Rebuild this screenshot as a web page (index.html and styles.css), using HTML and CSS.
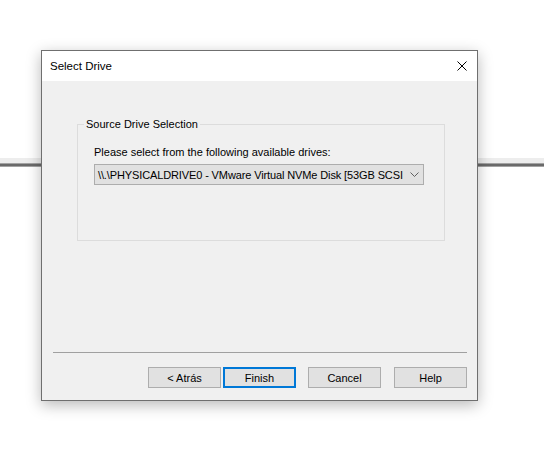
FILE: index.html
```html
<!DOCTYPE html>
<html>
<head>
<meta charset="utf-8">
<link rel="stylesheet" href="styles.css">
</head>
<body>
<div class="backdrop">
  <div class="band"></div>
  <div class="rule"></div>
</div>
<div class="dialog">
  <div class="titlebar">
    <span class="title">Select Drive</span>
    <svg class="close" width="10" height="10" viewBox="0 0 10 10"><path d="M0.5 0.5L9.5 9.5M9.5 0.5L0.5 9.5" stroke="#000" stroke-width="1" fill="none"/></svg>
  </div>
  <div class="body">
    <fieldset class="group">
      <legend>Source Drive Selection</legend>
      <div class="group-content">
        <div class="label">Please select from the following available drives:</div>
        <div class="combo">
          <span class="combo-text">\\.\PHYSICALDRIVE0 - VMware Virtual NVMe Disk [53GB SCSI</span>
          <svg class="chev" width="9" height="5" viewBox="0 0 9 5"><path d="M0.5 0.5L4.5 4.5L8.5 0.5" stroke="#606060" stroke-width="1" fill="none"/></svg>
        </div>
      </div>
    </fieldset>
    <div class="spacer"></div>
    <div class="separator"></div>
    <div class="buttons">
      <div class="btn">&lt; Atrás</div>
      <div class="btn btn-default">Finish</div>
      <div class="btn btn-cancel">Cancel</div>
      <div class="btn btn-help">Help</div>
    </div>
  </div>
</div>
</body>
</html>
```

FILE: styles.css
```css
html, body {
  margin: 0;
  padding: 0;
  background: #ffffff;
  width: 544px;
  height: 473px;
  overflow: hidden;
  font-family: "Liberation Sans", Arial, sans-serif;
  font-size: 11px;
  color: #000;
}

.backdrop {
  padding-top: 158px;
}
.band {
  height: 5px;
  background: #ededed;
}
.rule {
  border-top: 1px solid #a3a3a3;
  border-bottom: 1px solid #a3a3a3;
  height: 2px;
  background: #6a6a6a;
}

.dialog {
  position: absolute;
  left: 41px;
  top: 50px;
  width: 435px;
  height: 349px;
  border: 1px solid #6f6f6f;
  background: #f0f0f0;
  display: flex;
  flex-direction: column;
  box-shadow: 0 4px 14px rgba(0, 0, 0, 0.28);
}

.titlebar {
  height: 30px;
  background: #ffffff;
  display: flex;
  align-items: center;
  justify-content: space-between;
  padding: 0 10px 0 8px;
}
.title {
  font-size: 11.5px;
  margin-top: -1px;
}
.close {
  display: block;
}

.body {
  flex: 1;
  display: flex;
  flex-direction: column;
  padding: 0 10px 12px 0;
}

.group {
  margin: 37px 22px 0 35px;
  padding: 0;
  border: 1px solid #dcdcdc;
  min-width: 0;
}
.group legend {
  margin-left: 6px;
  padding: 0 2px;
  line-height: 13px;
}
.group-content {
  padding: 0 0 55px 16px;
}
.label {
  margin-top: 15px;
  line-height: 13px;
}
.combo {
  margin-top: 5px;
  width: 328px;
  height: 19px;
  border: 1px solid #adadad;
  background: #e1e1e1;
  display: flex;
  align-items: center;
}
.combo-text {
  flex: 1;
  white-space: nowrap;
  padding-left: 3px;
  letter-spacing: -0.12px;
}
.chev {
  display: block;
  margin-right: 4px;
  flex: none;
}

.spacer {
  flex: 1;
}
.separator {
  height: 1px;
  background: #a0a0a0;
  margin-left: 11px;
}
.buttons {
  display: flex;
  justify-content: flex-end;
  margin-top: 14px;
}
.btn {
  width: 71px;
  height: 19px;
  border: 1px solid #adadad;
  background: #e1e1e1;
  display: flex;
  align-items: center;
  justify-content: center;
}
.btn-default {
  width: 69px;
  height: 17px;
  border: 2px solid #0078d7;
  margin-left: 2px;
}
.btn-cancel {
  margin-left: 12px;
}
.btn-help {
  margin-left: 13px;
}
```
